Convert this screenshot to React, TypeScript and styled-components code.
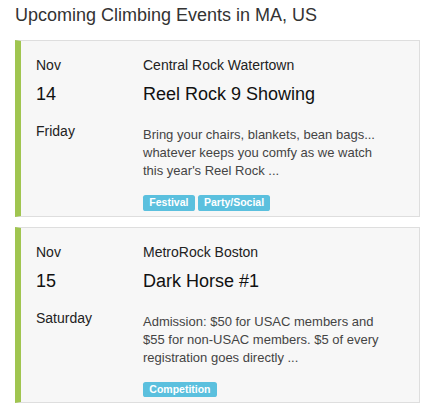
import React from "react";
import styled, { createGlobalStyle } from "styled-components";

const Global = createGlobalStyle`
  html, body { margin: 0; padding: 0; background: #fff; }
  body { font-family: "Liberation Sans", Arial, sans-serif; color: #333; }
`;

const Page = styled.div`
  padding: 5px 9px 0 15px;
`;

const Heading = styled.h3`
  margin: 0 0 15px 0;
  font-size: 18px;
  line-height: 20px;
  font-weight: normal;
  color: #333;
`;

const List = styled.div`
  display: flex;
  flex-direction: column;
  gap: 10px;
`;

const Card = styled.div`
  display: grid;
  grid-template-columns: 107px 1fr;
  background: #f7f7f7;
  border: 1px solid #dedede;
  border-left: 6px solid #a0c550;
  padding: 14px 15px 5px 15px;
`;

const Month = styled.div`
  font-size: 14px;
  line-height: 20px;
  color: #222;
`;

const Venue = styled.div`
  font-size: 14px;
  line-height: 20px;
  color: #222;
`;

const Day = styled.div`
  margin-top: 9px;
  font-size: 18px;
  line-height: 20px;
  color: #111;
`;

const Title = styled.div`
  margin-top: 9px;
  font-size: 18px;
  line-height: 20px;
  color: #111;
`;

const Weekday = styled.div`
  margin-top: 17px;
  font-size: 14px;
  line-height: 20px;
  color: #222;
`;

const Body = styled.div`
  margin-top: 17px;
  padding-top: 5px;
`;

const Desc = styled.p`
  margin: 0;
  max-width: 245px;
  font-size: 13px;
  line-height: 18px;
  color: #444;
`;

const Tags = styled.div`
  display: flex;
  gap: 3px;
  margin-top: 15px;
`;

const Tag = styled.span`
  display: inline-block;
  background: #5bc0de;
  color: #fff;
  font-weight: bold;
  font-size: 10.5px;
  line-height: 1;
  padding: 2.1px 6.3px 3.15px;
  border-radius: 2.6px;
`;

type Event = {
  month: string;
  day: string;
  weekday: string;
  venue: string;
  title: string;
  desc: string;
  tags: string[];
};

const events: Event[] = [
  {
    month: "Nov",
    day: "14",
    weekday: "Friday",
    venue: "Central Rock Watertown",
    title: "Reel Rock 9 Showing",
    desc: "Bring your chairs, blankets, bean bags... whatever keeps you comfy as we watch this year's Reel Rock ...",
    tags: ["Festival", "Party/Social"],
  },
  {
    month: "Nov",
    day: "15",
    weekday: "Saturday",
    venue: "MetroRock Boston",
    title: "Dark Horse #1",
    desc: "Admission: $50 for USAC members and $55 for non-USAC members. $5 of every registration goes directly ...",
    tags: ["Competition"],
  },
];

export default function App() {
  return (
    <>
      <Global />
      <Page>
        <Heading>Upcoming Climbing Events in MA, US</Heading>
        <List>
          {events.map((e) => (
            <Card key={e.title}>
              <Month>{e.month}</Month>
              <Venue>{e.venue}</Venue>
              <Day>{e.day}</Day>
              <Title>{e.title}</Title>
              <Weekday>{e.weekday}</Weekday>
              <Body>
                <Desc>{e.desc}</Desc>
                <Tags>
                  {e.tags.map((t) => (
                    <Tag key={t}>{t}</Tag>
                  ))}
                </Tags>
              </Body>
            </Card>
          ))}
        </List>
      </Page>
    </>
  );
}
